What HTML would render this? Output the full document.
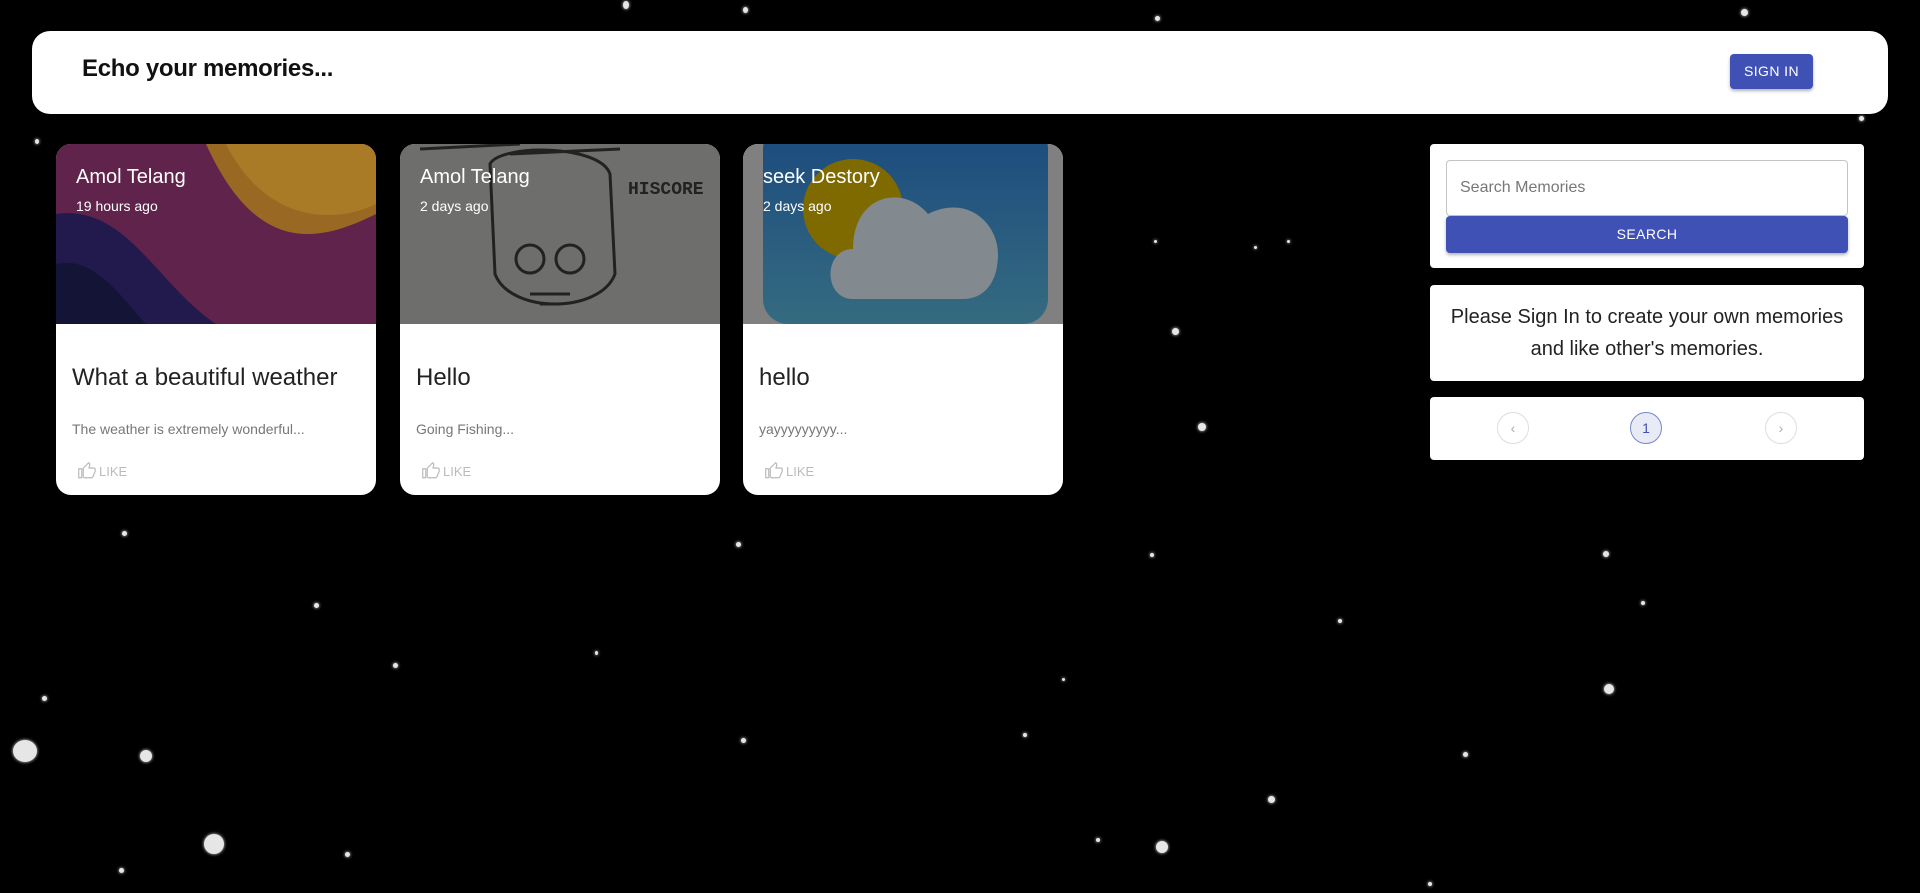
<!DOCTYPE html>
<html><head><meta charset="utf-8"><style>
*{box-sizing:border-box;margin:0;padding:0}
body{width:1920px;height:893px;background:#000;position:relative;overflow:hidden;font-family:"Liberation Sans",Roboto,sans-serif}
.s{position:absolute;background:#fff;border-radius:50%;box-shadow:0 0 3px #fff;opacity:.9}
.hdr{position:absolute;left:32px;top:31px;width:1856px;height:83px;background:#fff;border-radius:18px}
.hdr h1{position:absolute;left:50px;top:24px;font-size:24px;font-weight:bold;letter-spacing:-0.3px;color:#111}
.btn{position:absolute;background:#3f51b5;color:#fff;font-size:14px;text-align:center;border-radius:4px;box-shadow:0 2px 3px rgba(0,0,0,.3);letter-spacing:.4px}
.card{position:absolute;top:144px;width:320px;height:351px;background:#fff;border-radius:15px;overflow:hidden}
.img{position:absolute;left:0;top:0;width:320px;height:180px;overflow:hidden}
.au{position:absolute;left:20px;top:22px;color:#fff;font-size:20px}
.tm{position:absolute;left:20px;top:54px;color:#fff;font-size:14px}
.tt{position:absolute;left:16px;top:220px;font-size:24px;color:#222}
.ms{position:absolute;left:16px;top:277px;font-size:14px;color:#777}
.lk{position:absolute;left:22px;top:318px;font-size:13px;color:#bbb;display:flex;align-items:center;gap:3px}
.pp{position:absolute;left:1430px;width:434px;background:#fff;border-radius:4px}
.pc{position:absolute;top:412px;width:32px;height:32px;border-radius:50%;border:1px solid #ddd;font-size:14px;color:#aaa;text-align:center;line-height:30px}
</style></head><body>
<div class="hdr"><h1>Echo your memories...</h1>
<div class="btn" style="left:1698px;top:23px;width:83px;height:35px;line-height:35px">SIGN IN</div></div>

<div class="card" style="left:56px"><div class="img">
<svg width="320" height="180"><rect width="320" height="180" fill="#782c5e"/>
<path d="M150 0 C200 110 260 100 320 70 V0Z" fill="#c0822b"/><path d="M170 0 C210 80 280 80 320 60 V0Z" fill="#d49a30"/>
<path d="M0 70 C70 60 100 140 160 180 H0Z" fill="#2b2060"/><path d="M0 120 C40 110 70 160 90 180 H0Z" fill="#1a1a45"/>
<rect width="320" height="180" fill="rgba(0,0,0,.2)"/></svg>
<div class="au">Amol Telang</div><div class="tm">19 hours ago</div></div>
<div class="tt">What a beautiful weather</div><div class="ms">The weather is extremely wonderful...</div>
<div class="lk"><svg width="18" height="18" viewBox="0 0 24 24"><path d="M1 21h4V9H1zm22-11c0-1.1-.9-2-2-2h-6.3l1-4.6v-.3c0-.4-.2-.8-.4-1.1L14.2 1 7.6 7.6C7.2 7.9 7 8.4 7 9v10c0 1.1.9 2 2 2h9c.8 0 1.5-.5 1.8-1.2l3-7.1c.1-.2.2-.5.2-.7z" fill="none" stroke="#bbb" stroke-width="1.6"/></svg>LIKE</div></div>

<div class="card" style="left:400px"><div class="img">
<svg width="320" height="180"><rect width="320" height="180" fill="#6e6e6c"/>
<g fill="none" stroke="#222" stroke-width="3"><path d="M90 20 C100 0 200 0 210 30 L215 130 C200 170 110 170 95 130Z"/><circle cx="130" cy="115" r="14"/><circle cx="170" cy="115" r="14"/><path d="M130 150 H170 M140 160 H160"/><path d="M20 5 L120 0 M110 10 L220 5"/></g>
<text x="228" y="50" font-size="18" font-weight="bold" fill="#222" font-family="Liberation Mono">HISCORE</text></svg>
<div class="au">Amol Telang</div><div class="tm">2 days ago</div></div>
<div class="tt">Hello</div><div class="ms">Going Fishing...</div>
<div class="lk"><svg width="18" height="18" viewBox="0 0 24 24"><path d="M1 21h4V9H1zm22-11c0-1.1-.9-2-2-2h-6.3l1-4.6v-.3c0-.4-.2-.8-.4-1.1L14.2 1 7.6 7.6C7.2 7.9 7 8.4 7 9v10c0 1.1.9 2 2 2h9c.8 0 1.5-.5 1.8-1.2l3-7.1c.1-.2.2-.5.2-.7z" fill="none" stroke="#bbb" stroke-width="1.6"/></svg>LIKE</div></div>

<div class="card" style="left:743px"><div class="img">
<svg width="320" height="180"><rect width="320" height="180" fill="#808080"/>
<defs><linearGradient id="g" x1="0" y1="0" x2="0" y2="1"><stop offset="0" stop-color="#1b4a7e"/><stop offset="1" stop-color="#356b80"/></linearGradient></defs>
<rect x="20" y="-20" width="285" height="200" rx="25" fill="url(#g)"/>
<circle cx="110" cy="65" r="50" fill="#7f6a00"/>
<path d="M110 155 C80 155 80 105 110 105 C110 50 160 40 185 70 C225 50 255 80 255 110 C255 140 240 155 220 155Z" fill="#828a8f"/></svg>
<div class="au">seek Destory</div><div class="tm">2 days ago</div></div>
<div class="tt">hello</div><div class="ms">yayyyyyyyyy...</div>
<div class="lk"><svg width="18" height="18" viewBox="0 0 24 24"><path d="M1 21h4V9H1zm22-11c0-1.1-.9-2-2-2h-6.3l1-4.6v-.3c0-.4-.2-.8-.4-1.1L14.2 1 7.6 7.6C7.2 7.9 7 8.4 7 9v10c0 1.1.9 2 2 2h9c.8 0 1.5-.5 1.8-1.2l3-7.1c.1-.2.2-.5.2-.7z" fill="none" stroke="#bbb" stroke-width="1.6"/></svg>LIKE</div></div>

<div class="pp" style="top:144px;height:124px">
<div style="position:absolute;left:16px;top:16px;width:402px;height:56px;border:1px solid #c4c4c4;border-radius:4px;font-size:16px;color:#777;padding:18px 13px">Search Memories</div>
<div class="btn" style="left:16px;top:72px;width:402px;height:37px;line-height:37px">SEARCH</div></div>
<div class="pp" style="top:285px;height:96px;text-align:center;font-size:20px;line-height:32px;color:#222;padding-top:16px">Please Sign In to create your own memories<br>and like other's memories.</div>
<div class="pp" style="top:397px;height:63px"></div>
<div class="pc" style="left:1497px">‹</div>
<div class="pc" style="left:1630px;background:#e8eaf6;border-color:#7986cb;color:#3f51b5">1</div>
<div class="pc" style="left:1765px">›</div>

<div class="s" style="left:623px;top:1px;width:6px;height:8px"></div>
<div class="s" style="left:743px;top:7px;width:5px;height:6px"></div>
<div class="s" style="left:1155px;top:16px;width:5px;height:5px"></div>
<div class="s" style="left:1741px;top:9px;width:7px;height:7px"></div>
<div class="s" style="left:35px;top:139px;width:4px;height:5px"></div>
<div class="s" style="left:1859px;top:116px;width:5px;height:5px"></div>
<div class="s" style="left:1154px;top:240px;width:3px;height:3px"></div>
<div class="s" style="left:1254px;top:246px;width:3px;height:3px"></div>
<div class="s" style="left:1287px;top:240px;width:3px;height:3px"></div>
<div class="s" style="left:1172px;top:328px;width:7px;height:7px"></div>
<div class="s" style="left:1198px;top:423px;width:8px;height:8px"></div>
<div class="s" style="left:122px;top:531px;width:5px;height:5px"></div>
<div class="s" style="left:736px;top:542px;width:5px;height:5px"></div>
<div class="s" style="left:1150px;top:553px;width:4px;height:4px"></div>
<div class="s" style="left:1603px;top:551px;width:6px;height:6px"></div>
<div class="s" style="left:314px;top:603px;width:5px;height:5px"></div>
<div class="s" style="left:1641px;top:601px;width:4px;height:4px"></div>
<div class="s" style="left:1338px;top:619px;width:4px;height:4px"></div>
<div class="s" style="left:595px;top:651px;width:3px;height:4px"></div>
<div class="s" style="left:393px;top:663px;width:5px;height:5px"></div>
<div class="s" style="left:1062px;top:678px;width:3px;height:3px"></div>
<div class="s" style="left:1604px;top:684px;width:10px;height:10px"></div>
<div class="s" style="left:42px;top:696px;width:5px;height:5px"></div>
<div class="s" style="left:13px;top:740px;width:24px;height:22px"></div>
<div class="s" style="left:140px;top:750px;width:12px;height:12px"></div>
<div class="s" style="left:741px;top:738px;width:5px;height:5px"></div>
<div class="s" style="left:1023px;top:733px;width:4px;height:4px"></div>
<div class="s" style="left:1463px;top:752px;width:5px;height:5px"></div>
<div class="s" style="left:1268px;top:796px;width:7px;height:7px"></div>
<div class="s" style="left:204px;top:834px;width:20px;height:20px"></div>
<div class="s" style="left:345px;top:852px;width:5px;height:5px"></div>
<div class="s" style="left:1156px;top:841px;width:12px;height:12px"></div>
<div class="s" style="left:1096px;top:838px;width:4px;height:4px"></div>
<div class="s" style="left:119px;top:868px;width:5px;height:5px"></div>
<div class="s" style="left:1428px;top:882px;width:4px;height:4px"></div>
</body></html>
